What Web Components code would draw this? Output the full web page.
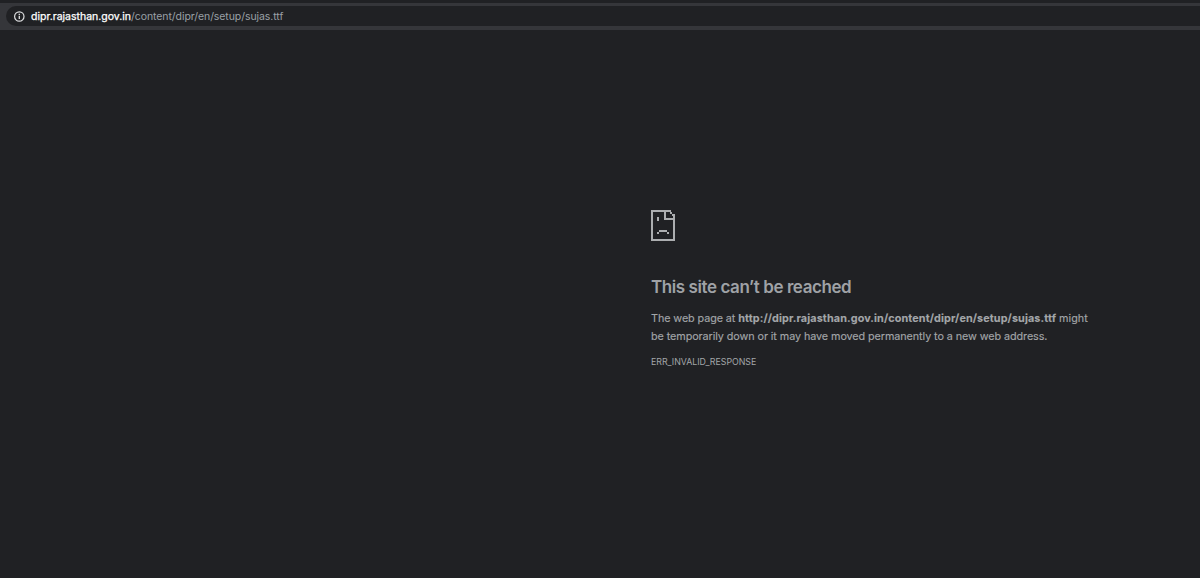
<!DOCTYPE html>
<html lang="en"><head><meta charset="utf-8"><title>dipr.rajasthan.gov.in</title>
<style>html,body{margin:0;height:100%;background:#202124;overflow:hidden}</style></head>
<body><browser-window></browser-window>
<script>
const define=(name,html)=>customElements.define(name,class extends HTMLElement{
 constructor(){super();const t=document.createElement('template');t.innerHTML=html;this.attachShadow({mode:'open'}).append(t.content.cloneNode(true));}
});
define('info-icon',`<style>:host{display:block;width:11px;height:11px}svg{display:block}</style>
<svg width="11" height="11" viewBox="0 0 11 11"><circle cx="5.3" cy="5.5" r="4.7" fill="none" stroke="#dfe0e2" stroke-width="1.2"/><path d="M5.3 4.8v3.3M5.3 2.7v1.3" stroke="#dfe0e2" stroke-width="1.3"/></svg>`);
define('address-bar',`<style>:host{display:block;box-sizing:border-box;height:27px;padding:3px 0 4px 6px;background:#35363a}
.pill{display:flex;align-items:center;box-sizing:border-box;height:20px;padding-left:8px;border-radius:10px 0 0 10px;background:#202124;font:10.5px/20px Inter,sans-serif;color:#9aa0a6;white-space:nowrap}
info-icon{margin-right:6px}.host,.path{padding-top:2px}.host{color:#fff;-webkit-text-stroke:.25px}.path{letter-spacing:-.075px}</style>
<div class="pill"><info-icon></info-icon><span class="host"><slot name="host"></slot></span><span class="path"><slot name="path"></slot></span></div>`);
define('sad-page-icon',`<style>:host{display:block;width:25px;height:31px}svg{display:block}</style>
<svg width="25" height="31" viewBox="0 0 25 31" fill="#acaeb0" shape-rendering="crispEdges"><path d="M0 0H20V2H2V29H22V10H24V31H0ZM13 2H15V8H22V4H24V10H13ZM19 2H21V4H19ZM21 4H22V6H21ZM6 7H8V11H6ZM8 20H16V22H8ZM6 22H8V24H6ZM16 22H18V24H16Z"/></svg>`);
define('error-page',`<style>:host{display:block;padding:180px 0 0 651px;font-family:Inter,sans-serif;color:#a3a6a9;white-space:nowrap}
h1{margin:33px 0 0;font-size:17px;line-height:26px;font-weight:600;letter-spacing:-.42px;color:#9fa2a6}
p{margin:10px 0 0;font-size:10.8px;line-height:18px;-webkit-text-stroke:.12px}b{font-weight:700;letter-spacing:.115px}.l{display:block;width:max-content}
.a{letter-spacing:-.09px}.two{letter-spacing:-.08px}
.code{margin-top:9px;font-size:8.8px;line-height:14px;width:max-content;letter-spacing:-.02px}</style>
<sad-page-icon></sad-page-icon><h1><span><slot name="title"></slot></span></h1>
<p><span class="l"><span class="a">The web page at </span><b>http://dipr.rajasthan.gov.in/content/dipr/en/setup/sujas.ttf</b> might</span><span class="l two">be temporarily down or it may have moved permanently to a new web address.</span></p><div class="code"><slot name="code"></slot></div>`);
define('browser-window',`<style>:host{display:flex;flex-direction:column;box-sizing:border-box;height:100vh;padding-top:3px;background:#202124}error-page{flex:1}</style>
<address-bar><span slot="host">dipr.rajasthan.gov.in</span><span slot="path">/content/dipr/en/setup/sujas.ttf</span></address-bar>
<error-page><span slot="title">This site can’t be reached</span><span slot="code">ERR_INVALID_RESPONSE</span></error-page>`);
</script></body></html>
